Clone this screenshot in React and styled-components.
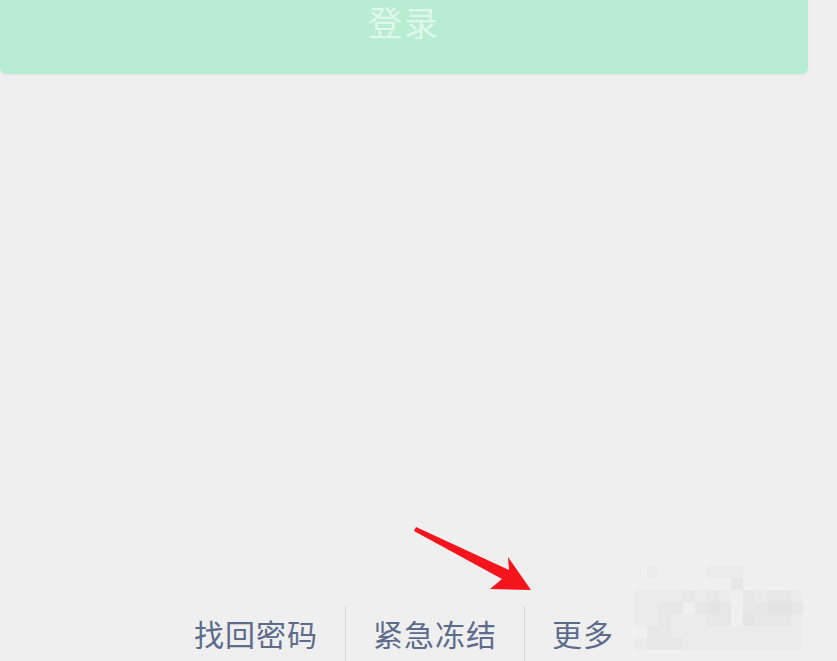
import React from "react";
import styled, { createGlobalStyle } from "styled-components";

const Global = createGlobalStyle`
  html, body { margin: 0; padding: 0; background: #efefef; }
  body { font-family: "Noto Sans CJK SC", "Noto Sans", sans-serif; }
`;

const Page = styled.div`
  position: relative;
  width: 837px;
  height: 661px;
  overflow: hidden;
  background: #efefef;
`;

const Column = styled.div`
  width: 808px;
  height: 100%;
  display: flex;
  flex-direction: column;
`;

const LoginButton = styled.div`
  height: 74px;
  box-sizing: border-box;
  padding-bottom: 30px;
  display: flex;
  align-items: center;
  justify-content: center;
  background: #b7edd2;
  border-radius: 0 0 7px 7px;
  box-shadow: 0 1px 2px rgba(0, 0, 0, 0.06);
  color: rgba(255, 255, 255, 0.6);
  font-size: 34px;
  line-height: 36px;
  letter-spacing: 2px;
`;

const Links = styled.div`
  margin-top: auto;
  height: 70px;
  flex-shrink: 0;
  display: flex;
  justify-content: center;
  margin-bottom: -15px;
`;

const LinkItem = styled.div`
  padding: 10px 27px 0;
  font-size: 30px;
  line-height: 34px;
  color: #5d6c8c;
  letter-spacing: 1px;
`;

const Sep = styled.div`
  width: 1px;
  background: #d6d6d6;
`;

const Overlay = styled.svg`
  position: absolute;
  left: 0;
  top: 0;
  pointer-events: none;
`;

const mosaic = [
  [0, 1, 0, 0, 0, 0, 1, 1, 1, 0, 0, 0, 0, 0],
  [0, 0, 0, 0, 0, 0, 0, 0, 2, 0, 0, 0, 0, 0],
  [1, 1, 1, 1, 2, 1, 2, 1, 0, 2, 1, 2, 2, 1],
  [1, 1, 2, 2, 0, 2, 3, 2, 0, 2, 2, 3, 3, 2],
  [1, 1, 2, 1, 1, 1, 2, 2, 0, 3, 2, 2, 2, 1],
  [0, 2, 2, 1, 1, 1, 1, 1, 1, 1, 1, 1, 1, 1],
  [1, 2, 2, 2, 1, 1, 1, 1, 1, 1, 1, 1, 1, 1],
];
const shades = ["#efefef", "#ebebeb", "#e7e7e7", "#e4e4e4"];

export default function App() {
  return (
    <Page>
      <Global />
      <Column>
        <LoginButton>登录</LoginButton>
        <Links>
          <LinkItem>找回密码</LinkItem>
          <Sep />
          <LinkItem>紧急冻结</LinkItem>
          <Sep />
          <LinkItem>更多</LinkItem>
        </Links>
      </Column>
      <Overlay width="837" height="661" viewBox="0 0 837 661">
        {mosaic.map((row, r) =>
          row.map((v, c) =>
            v ? (
              <rect
                key={r + "-" + c}
                x={635 + c * 12}
                y={566 + r * 12}
                width="12"
                height="12"
                fill={shades[v]}
              />
            ) : null
          )
        )}
        <path
          d="M414 531 L416 527 L509 570 L508 557 L531 590 L490 589 L502 579 Z"
          fill="#f5141c"
        />
      </Overlay>
    </Page>
  );
}
